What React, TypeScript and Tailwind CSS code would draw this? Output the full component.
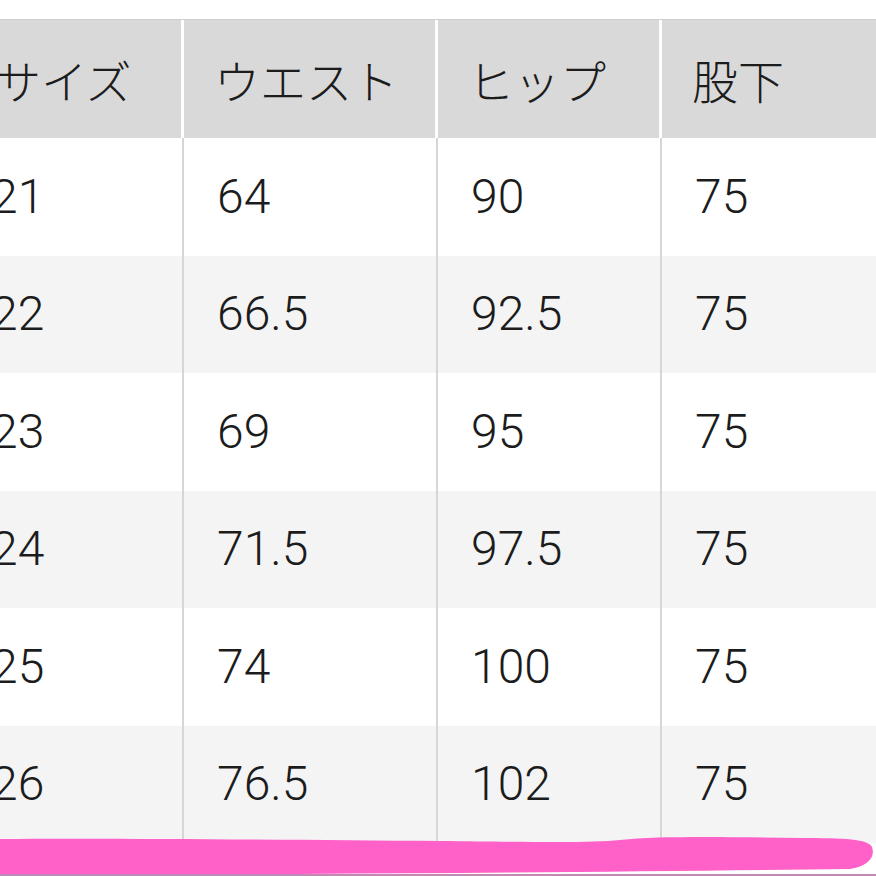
const headers = ["サイズ", "ウエスト", "ヒップ", "股下"];

const rows = [
  ["21", "64", "90", "75"],
  ["22", "66.5", "92.5", "75"],
  ["23", "69", "95", "75"],
  ["24", "71.5", "97.5", "75"],
  ["25", "74", "100", "75"],
  ["26", "76.5", "102", "75"],
];

const widths = ["w-[226px]", "w-[254px]", "w-[224px]", "flex-1"];

function HighlightStroke() {
  return (
    <svg
      className="absolute left-0 top-[832px]"
      width="876"
      height="44"
      viewBox="0 0 876 44"
    >
      <path
        d="M0 7 C120 6 300 8 440 9 C540 10 590 11 620 8 C660 4 720 5 800 6 C845 6 868 7 872 15 C876 26 866 35 850 37 C700 39 500 41 300 42 C180 42 80 42 0 42 Z"
        fill="#ff61c9"
      />
      <rect x="0" y="42" width="876" height="2" fill="#9a3b82" opacity="0.6" />
    </svg>
  );
}

export default function App() {
  return (
    <div className="relative h-[876px] w-[876px] overflow-hidden bg-white text-[#1c1c1c]">
      <div className="-ml-[42px] mt-[19px] flex w-[960px] flex-col">
        <div className="flex h-[119px] border-t border-[#cdcdcd]">
          {headers.map((h, i) => (
            <div
              key={h}
              className={`${widths[i]} ${i === 0 ? "pl-[37px]" : "pl-[30px]"} flex items-center border-r-[3px] border-white bg-[#d9d9d9] text-[46px] font-light [font-family:'Noto_Sans_CJK_JP',sans-serif]`}
            >
              {h}
            </div>
          ))}
        </div>
        {rows.map((r, ri) => (
          <div
            key={ri}
            className={`flex h-[117.5px] ${ri % 2 === 1 ? "bg-[#f4f4f4]" : "bg-white"}`}
          >
            {r.map((c, ci) => (
              <div
                key={ci}
                className={`${widths[ci]} flex items-center border-r-2 border-[#d6d6d6] pl-[33px] text-[48px] font-light [font-family:Roboto,'Liberation_Sans',sans-serif]`}
              >
                {c}
              </div>
            ))}
          </div>
        ))}
      </div>
      <HighlightStroke />
    </div>
  );
}
